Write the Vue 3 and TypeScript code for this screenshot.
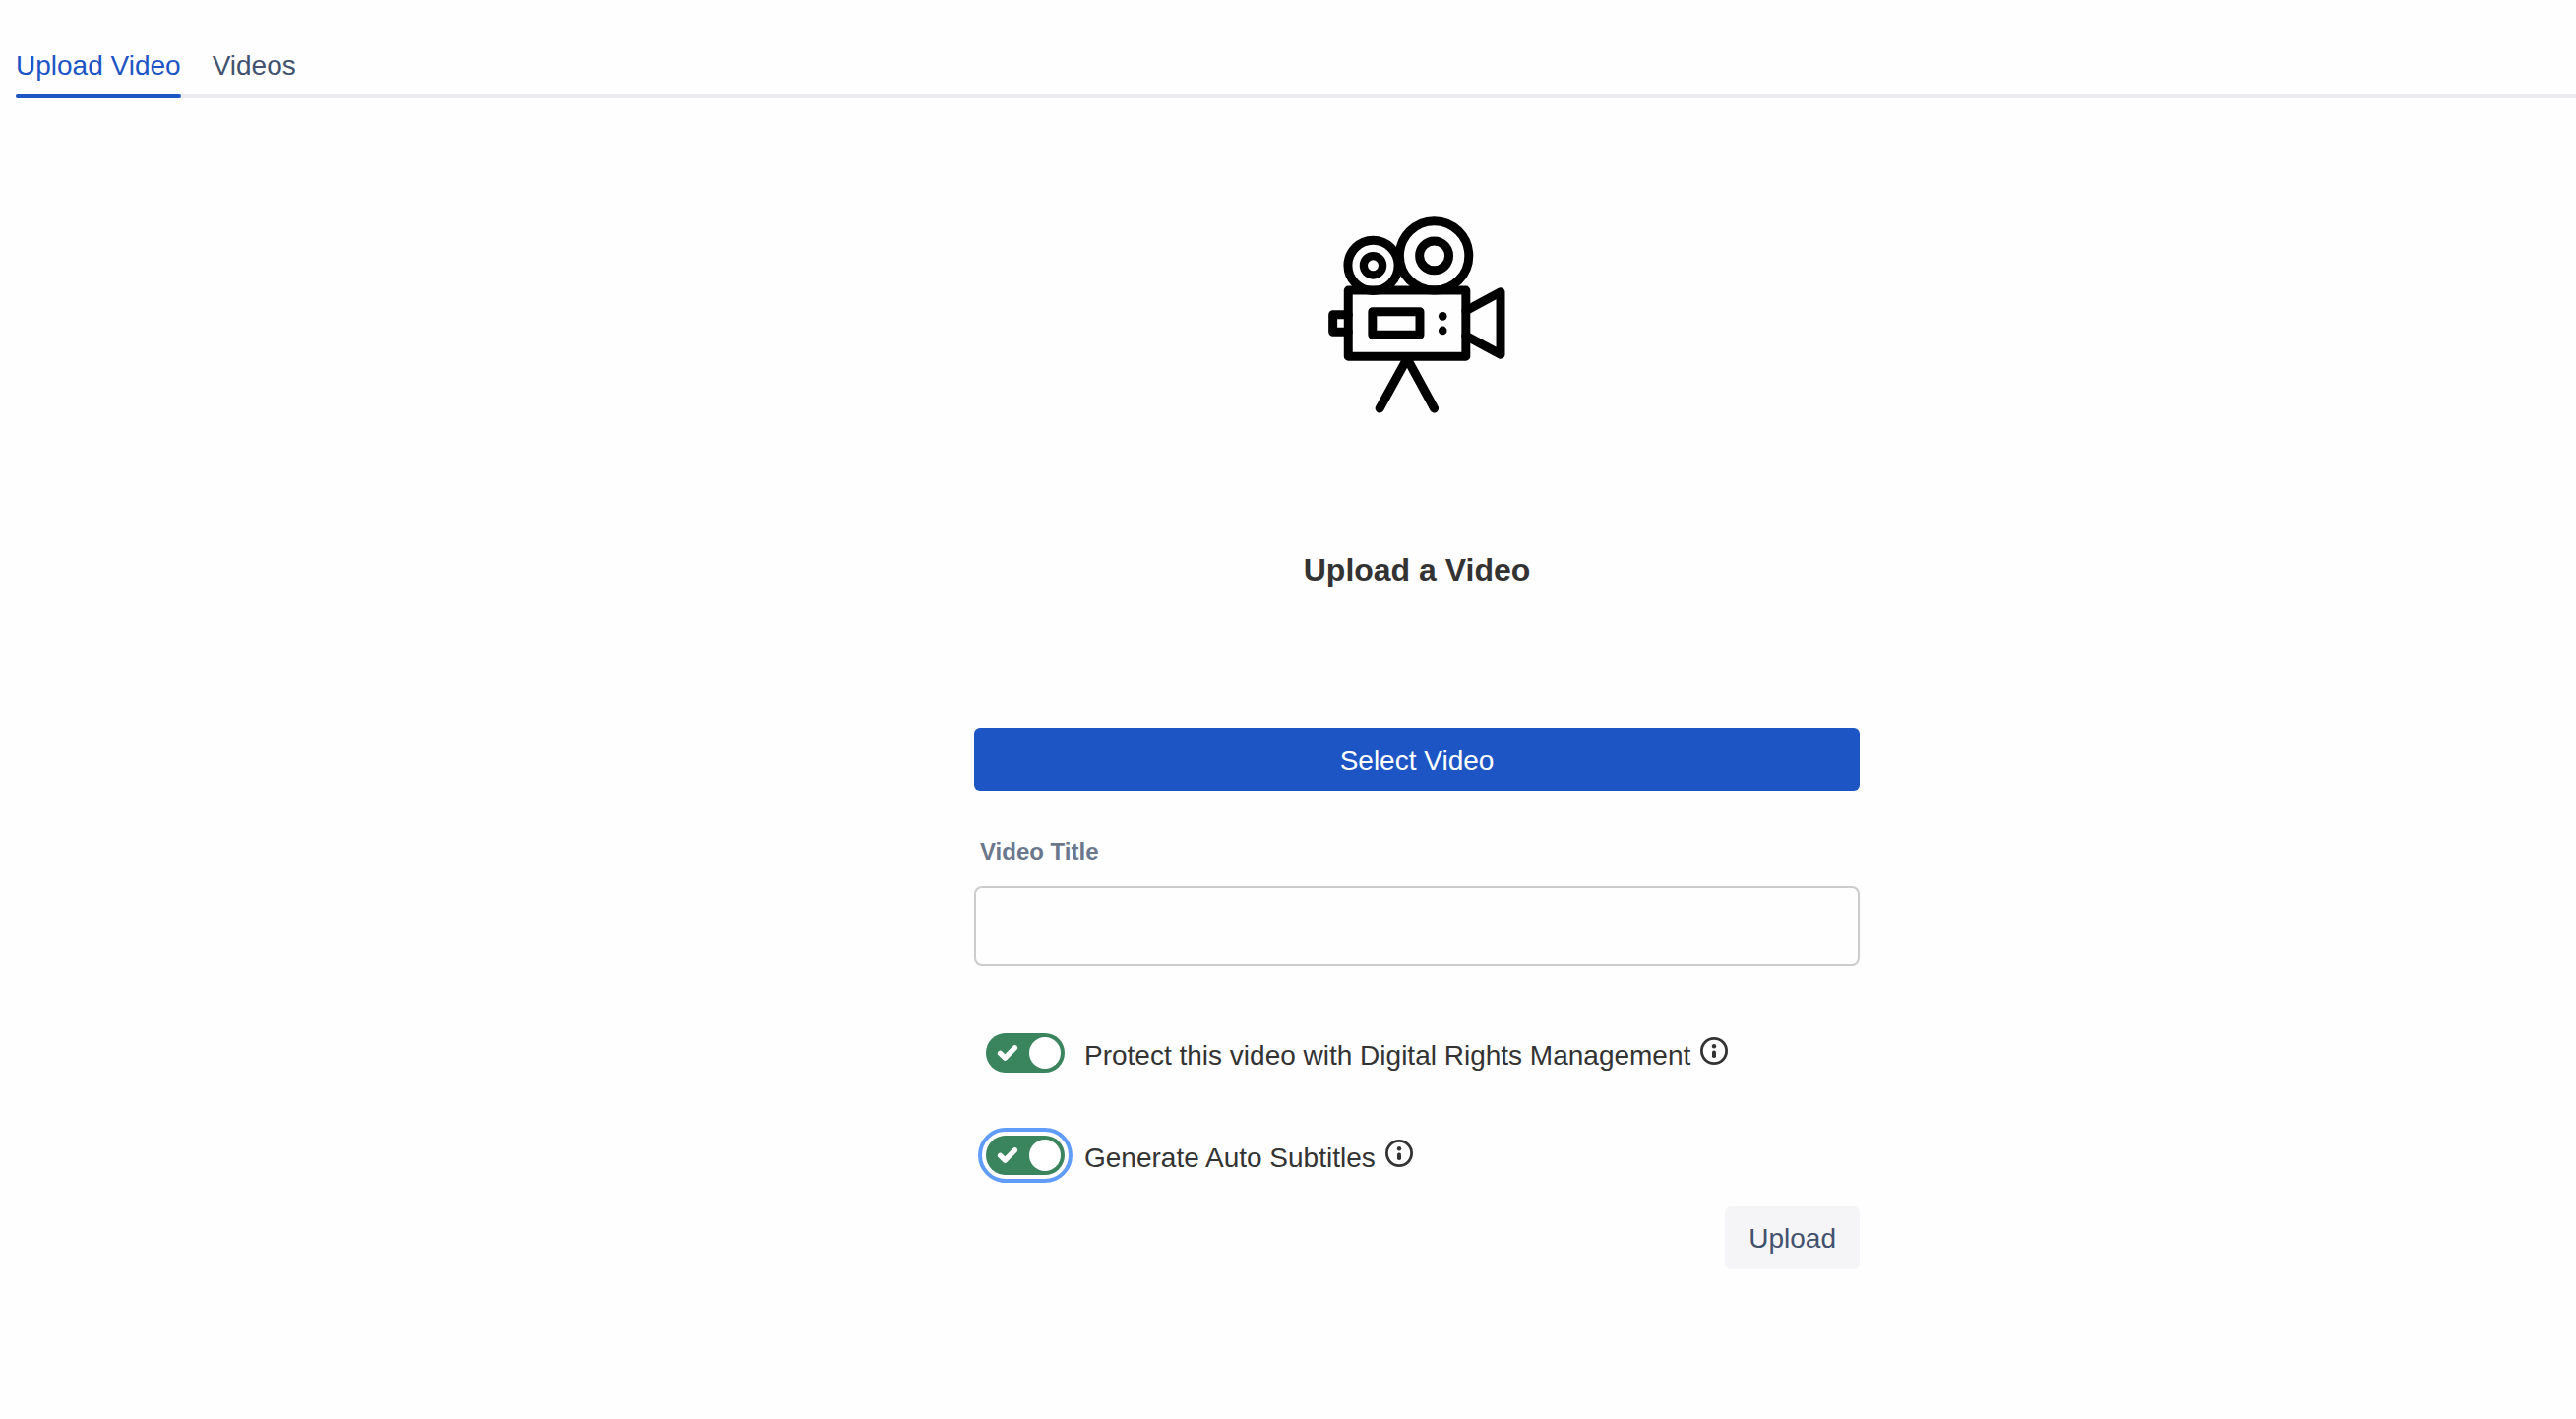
<script setup lang="ts">
import { ref } from 'vue'

interface Tab {
  id: string
  label: string
}

interface Option {
  id: string
  label: string
  enabled: boolean
}

const tabs: Tab[] = [
  { id: 'upload', label: 'Upload Video' },
  { id: 'videos', label: 'Videos' },
]

const activeTab = ref('upload')
const title = ref('')
const focusedOption = ref('subtitles')
const options = ref<Option[]>([
  { id: 'drm', label: 'Protect this video with Digital Rights Management', enabled: true },
  { id: 'subtitles', label: 'Generate Auto Subtitles', enabled: true },
])
</script>

<template>
  <div class="page">
    <nav class="tabs" role="tablist">
      <button
        v-for="tab in tabs"
        :key="tab.id"
        type="button"
        role="tab"
        class="tab"
        :class="{ active: tab.id === activeTab }"
        :aria-selected="tab.id === activeTab"
        @click="activeTab = tab.id"
      >
        {{ tab.label }}
      </button>
    </nav>

    <main class="content">
      <form class="form" @submit.prevent>
        <svg class="camera" viewBox="60 60 542 602" fill="none" stroke="#000" stroke-width="27" stroke-linecap="round" stroke-linejoin="round" aria-hidden="true">
          <circle cx="384" cy="180" r="106" />
          <circle cx="384" cy="180" r="45" />
          <circle cx="197" cy="210" r="77" />
          <circle cx="197" cy="210" r="29" stroke-width="25" />
          <rect x="121" y="286" width="360" height="202" />
          <rect x="195" y="351" width="145" height="71" />
          <path d="M121 360H74V413H121" />
          <path d="M481 348L587 291V482L481 425" />
          <path d="M217 647L301 495L384 647" />
          <circle cx="410" cy="365" r="13" fill="#000" stroke="none" />
          <circle cx="410" cy="409" r="13" fill="#000" stroke="none" />
        </svg>

        <h1 class="heading">Upload a Video</h1>

        <button type="button" class="button primary">Select Video</button>

        <label class="field-label" for="video-title">Video Title</label>
        <input id="video-title" v-model="title" class="field" type="text" />

        <div class="options">
          <div v-for="option in options" :key="option.id" class="option">
            <span class="switch">
              <input
                :id="option.id"
                v-model="option.enabled"
                class="toggle"
                :class="{ focused: focusedOption === option.id }"
                type="checkbox"
                role="switch"
                @focus="focusedOption = option.id"
                @blur="focusedOption = ''"
              />
              <svg v-if="option.enabled" class="check" viewBox="0 0 80 40" aria-hidden="true">
                <path d="M14.6 20.4L19.4 25.2L29.4 14.8" />
              </svg>
            </span>
            <label class="option-label" :for="option.id">{{ option.label }}</label>
            <button type="button" class="info" :aria-label="'About: ' + option.label">
              <svg viewBox="0 0 28 28" aria-hidden="true">
                <circle cx="14" cy="14" r="12.6" fill="none" stroke="#333" stroke-width="2.8" />
                <circle cx="14" cy="9.2" r="2.2" fill="#333" />
                <rect x="12" y="13.6" width="4" height="7.4" rx="1.8" fill="#333" />
              </svg>
            </button>
          </div>
        </div>

        <button type="submit" class="button subtle">Upload</button>
      </form>
    </main>
  </div>
</template>

<style>
body {
  margin: 0;
  background: #fefefe;
}
</style>

<style scoped>
.page {
  padding-top: 46px;
  color: #333;
  font-family: "Liberation Sans", Arial, sans-serif;
  font-size: 28px;
  line-height: 42px;
}

button,
input {
  box-sizing: border-box;
  margin: 0;
  padding: 0;
  border: 0;
  font: inherit;
}

button {
  cursor: pointer;
}

.tabs {
  display: flex;
  gap: 32px;
  margin-left: 16px;
  box-shadow: inset 0 -4px #ebecf0;
}

.tab {
  padding-bottom: 12px;
  background: none;
  color: #42526e;
  position: relative;
}

.tab.active {
  color: #1d55c4;
}

.tab.active::after {
  content: "";
  position: absolute;
  left: 0;
  right: 0;
  bottom: 0;
  height: 4px;
  border-radius: 2px;
  background: #1d55c4;
}

.content {
  padding: 120px 0 80px 262px;
}

.form {
  display: flex;
  flex-direction: column;
  max-width: 900px;
  margin: 0 auto;
}

.camera {
  align-self: center;
  width: 180px;
  height: 200px;
}

.heading {
  margin: 139px 0 141px;
  font-size: 32px;
  line-height: 40px;
  text-align: center;
}

.button {
  height: 64px;
  padding: 2px 24px 0;
  border-radius: 6px;
}

.primary {
  background: #1d55c4;
  color: #fff;
}

.field-label {
  margin: 42px 0 14px 6px;
  color: #6b778c;
  font-size: 24px;
  font-weight: bold;
  line-height: 40px;
}

.field {
  width: 100%;
  height: 82px;
  padding: 0 16px;
  border: 2px solid #ccc;
  border-radius: 8px;
  background: #fefefe;
}

.options {
  display: flex;
  flex-direction: column;
  gap: 64px;
  margin: 68px 0 32px 12px;
}

.option {
  display: flex;
  align-items: flex-start;
  height: 40px;
}

.switch {
  position: relative;
  width: 80px;
  height: 40px;
}

.toggle {
  display: flex;
  align-items: center;
  appearance: none;
  width: 80px;
  height: 40px;
  padding: 4px;
  border-radius: 20px;
  background: #6b778c;
  cursor: pointer;
  outline: none;
}

.toggle::after {
  content: "";
  width: 32px;
  height: 32px;
  border-radius: 50%;
  background: #fff;
}

.toggle:checked {
  justify-content: flex-end;
  background: #3a855d;
}

.toggle.focused {
  outline: 4px solid #609dfb;
  outline-offset: 4px;
}

.check {
  position: absolute;
  inset: 0;
  fill: none;
  stroke: #fff;
  stroke-width: 5.4;
  stroke-linecap: round;
  stroke-linejoin: round;
  pointer-events: none;
}

.option-label {
  padding-top: 2px;
  margin: 0 10px 0 20px;
}

.info {
  display: flex;
  width: 28px;
  height: 28px;
  margin-top: 4px;
  background: none;
}

.subtle {
  align-self: flex-end;
  background: #f5f5f7;
  color: #42526e;
}
</style>
